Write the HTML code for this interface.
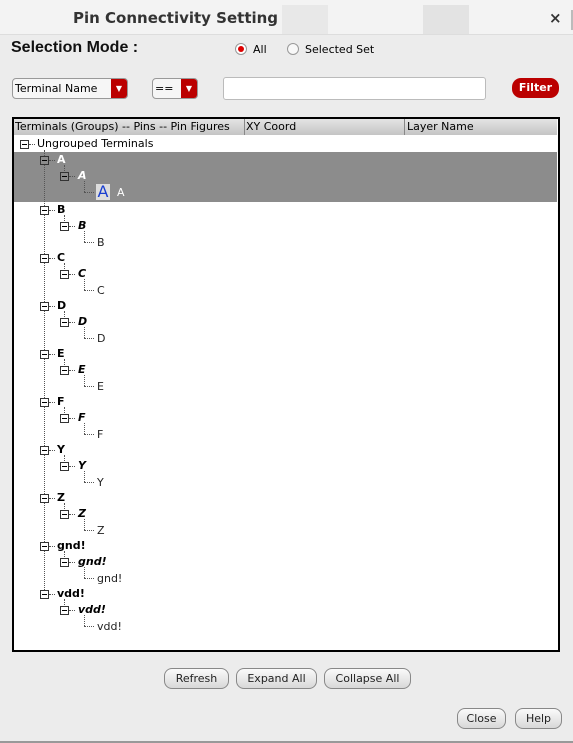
<!DOCTYPE html><html><head><style>
body{margin:0;width:573px;height:743px;background:#ececec;font-family:"DejaVu Sans","Liberation Sans",sans-serif;font-size:11px;position:relative;overflow:hidden}
.a{position:absolute;white-space:nowrap}
.btn{position:absolute;height:19px;border:1px solid #888;border-radius:8px;background:linear-gradient(#fafafa,#d8d8d8);font-size:11px;text-align:center;line-height:19px;color:#222}
.ex{position:absolute;width:7px;height:7px;border:1px solid #333;background:#fff}
.ex:after{content:"";position:absolute;left:1px;top:3px;width:5px;height:1px;background:#000}
.ex.s{background:#8c8c8c}
.h{position:absolute;border-top:1px dotted #555;height:0}
.v{position:absolute;border-left:1px dotted #555;width:0}
.t{position:absolute;font-size:11px;line-height:14px}
</style></head><body>
<div class="a" style="left:0;top:0;width:573px;height:34px;background:#f3f3f3;border-bottom:1px solid #ddd"></div>
<div class="a" style="left:282px;top:5px;width:46px;height:29px;background:#e8e8e8"></div>
<div class="a" style="left:423px;top:5px;width:46px;height:29px;background:#e3e3e3"></div>
<div class="a" style="left:73px;top:9px;font-size:15px;font-weight:bold;color:#333">Pin Connectivity Setting</div>
<div class="a" style="left:549px;top:9px;font-size:15px;font-weight:bold;color:#333">×</div>
<div class="a" style="left:571px;top:10px;width:2px;height:20px;background:#bbb"></div>
<div class="a" style="left:11px;top:39px;font-size:16px;font-weight:bold;font-family:'Liberation Sans',sans-serif;color:#111">Selection Mode :</div>
<div class="a" style="left:235px;top:43px;width:10px;height:10px;border-radius:50%;border:1px solid #999;background:#fff"><div style="margin:2px;width:6px;height:6px;border-radius:50%;background:#d00"></div></div>
<div class="a" style="left:253px;top:43px;">All</div>
<div class="a" style="left:287px;top:43px;width:10px;height:10px;border-radius:50%;border:1px solid #999;background:#f8f8f8"></div>
<div class="a" style="left:305px;top:43px;">Selected Set</div>
<div class="a" style="left:12px;top:78px;width:114px;height:19px;border:1px solid #999;border-radius:4px;background:#f6f6f6;overflow:hidden"><span style="position:absolute;left:2px;top:3px">Terminal Name</span><div style="position:absolute;right:0;top:0;width:16px;height:19px;background:#b00;color:#fff;font-size:8px;text-align:center;line-height:19px">▼</div></div>
<div class="a" style="left:152px;top:78px;width:44px;height:19px;border:1px solid #999;border-radius:4px;background:#f6f6f6;overflow:hidden"><span style="position:absolute;left:2px;top:3px">==</span><div style="position:absolute;right:0;top:0;width:16px;height:19px;background:#b00;color:#fff;font-size:8px;text-align:center;line-height:19px">▼</div></div>
<div class="a" style="left:223px;top:77px;width:261px;height:21px;border:1px solid #bbb;border-radius:3px;background:#fff"></div>
<div class="a" style="left:512px;top:78px;width:47px;height:20px;border-radius:9px;background:#b00;color:#fff;font-weight:bold;text-align:center;line-height:20px">Filter</div>
<div class="a" style="left:12px;top:117px;width:544px;height:531px;border:2px solid #000;background:#fff"></div>
<div class="a" style="left:14px;top:119px;width:543px;height:16px;background:linear-gradient(#e4e4e4,#c4c4c4)"></div>
<div class="a" style="left:15px;top:120px;">Terminals (Groups) -- Pins -- Pin Figures</div>
<div class="a" style="left:244px;top:119px;width:1px;height:16px;background:#888"></div>
<div class="a" style="left:246px;top:120px;">XY Coord</div>
<div class="a" style="left:404px;top:119px;width:1px;height:16px;background:#888"></div>
<div class="a" style="left:407px;top:120px;">Layer Name</div>
<div class="a" style="left:14px;top:152px;width:543px;height:50px;background:#8c8c8c"></div>
<div class="ex" style="left:20px;top:140px"></div><div class="h" style="left:29px;top:144px;width:6px"></div>
<div class="t" style="left:37px;top:137px">Ungrouped Terminals</div>
<div class="v" style="left:44px;top:150px;height:444px"></div>
<div id="tree"></div>
<div class="a" style="left:96px;top:184px;width:14px;height:16px;background:#ddd;color:#1a3fd0;font-size:16px;line-height:16px;text-align:center">A</div>
<div class="btn" style="left:164px;top:668px;width:63px">Refresh</div>
<div class="btn" style="left:236px;top:668px;width:79px">Expand All</div>
<div class="btn" style="left:324px;top:668px;width:85px">Collapse All</div>
<div class="btn" style="left:457px;top:708px;width:47px">Close</div>
<div class="btn" style="left:515px;top:708px;width:45px">Help</div>
<div class="a" style="left:0;top:741px;width:573px;height:2px;background:#999"></div>
<script>
var g=[["A",160],["B",210],["C",258],["D",306],["E",354],["F",402],["Y",450],["Z",498],["gnd!",546],["vdd!",594]],h="";
g.forEach(function(x,i){var y=x[1],s=i==0,c=s?"#fff":"#000",cc=s?"#fff":"#222",k=s?"ex s":"ex";
h+='<div class="'+k+'" style="left:40px;top:'+(y-4)+'px"></div><div class="h" style="left:49px;top:'+y+'px;width:6px"></div>';
h+='<div class="t" style="left:57px;top:'+(y-7)+'px;font-weight:bold;color:'+c+'">'+x[0]+'</div>';
h+='<div class="v" style="left:64px;top:'+(y+5)+'px;height:6px"></div>';
h+='<div class="'+k+'" style="left:60px;top:'+(y+12)+'px"></div><div class="h" style="left:69px;top:'+(y+16)+'px;width:6px"></div>';
h+='<div class="t" style="left:78px;top:'+(y+9)+'px;font-weight:bold;font-style:italic;color:'+c+'">'+x[0]+'</div>';
var fy=y+32;
h+='<div class="v" style="left:84px;top:'+(y+21)+'px;height:'+(fy-y-21)+'px"></div><div class="h" style="left:84px;top:'+fy+'px;width:10px"></div>';
h+='<div class="t" style="left:'+(s?117:97)+'px;top:'+(fy-6)+'px;color:'+cc+'">'+x[0]+'</div>';});
document.getElementById("tree").innerHTML=h;
</script>
</body></html>
